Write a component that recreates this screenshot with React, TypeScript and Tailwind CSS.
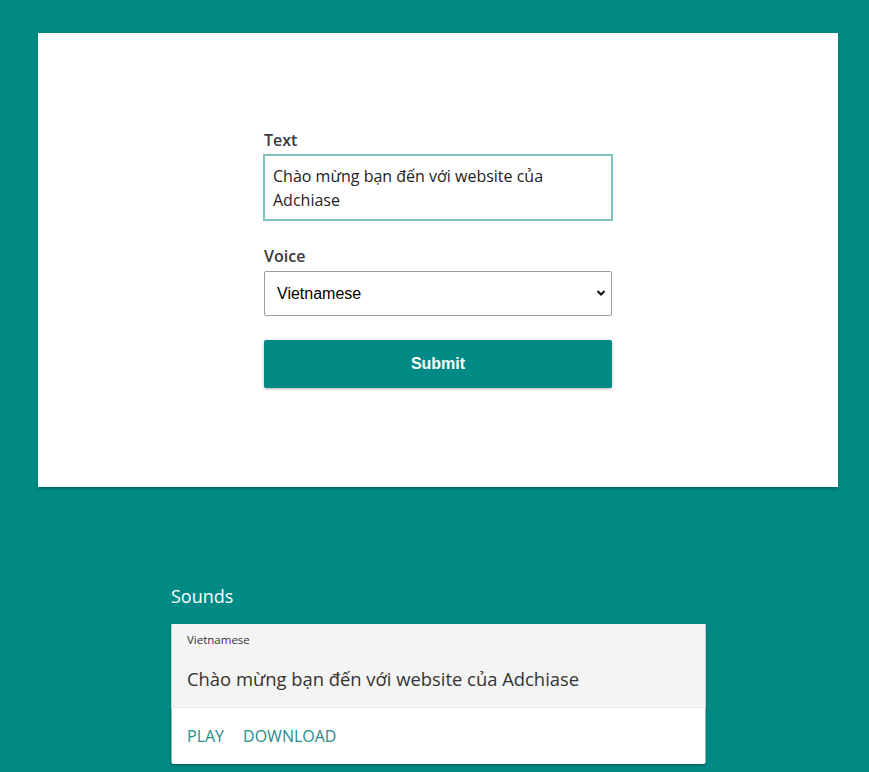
export default function App() {
  return (
    <div className="min-h-screen bg-[#008a86] pt-[33px] pb-[8px] font-['Open_Sans',sans-serif]">
      <div className="ml-[38px] w-[800px] h-[454px] bg-white shadow-[0_2px_3px_rgba(0,0,0,0.25)] pt-[95px]">
        <form className="w-[348px] mx-auto flex flex-col" onSubmit={(e) => e.preventDefault()}>
          <label className="text-[16px] leading-[24px] font-semibold text-[#3a3a3a]">Text</label>
          <textarea
            className="mt-[2px] w-[350px] -ml-[1px] h-[67px] border-2 border-[#7fc3c1] px-[8px] py-[8px] text-[16px] leading-[24px] text-[#222] resize-none outline-none"
            defaultValue="Chào mừng bạn đến với website của Adchiase"
          />
          <label className="mt-[23px] text-[16px] leading-[24px] font-semibold text-[#3a3a3a]">Voice</label>
          <div className="relative mt-[3px] h-[45px] border border-[#9e9e9e] rounded-[2px] bg-white flex items-center px-[12px]">
            <span className="font-['Liberation_Sans',Arial,sans-serif] text-[16px] text-black">Vietnamese</span>
            <svg className="absolute right-[5px] top-[17px]" width="10" height="8" viewBox="0 0 10 8">
              <path d="M1.5 2 L5 5.5 L8.5 2" stroke="#111" strokeWidth="2" fill="none" />
            </svg>
          </div>
          <button
            type="submit"
            className="mt-[24px] h-[48px] bg-[#008a86] rounded-[2px] shadow-[0_1px_3px_rgba(0,0,0,0.3)] text-white font-bold text-[16px] font-['Liberation_Sans',Arial,sans-serif]"
          >
            Submit
          </button>
        </form>
      </div>

      <div className="w-[534px] mx-auto mt-[96px] translate-x-[3.5px]">
        <h2 className="text-white text-[18px] leading-[27px]">Sounds</h2>
        <div className="mt-[14px] bg-white rounded-[2px] shadow-[0_2px_3px_rgba(0,0,0,0.25)]">
          <div className="bg-[#f4f4f4] px-[16px] pt-[8px] pb-[15px] border-b border-[#e6e6e6]">
            <div className="text-[11.5px] leading-[16px] text-[#333]">Vietnamese</div>
            <div className="mt-[17px] text-[18.4px] leading-[27px] text-[#333]">Chào mừng bạn đến với website của Adchiase</div>
          </div>
          <div className="flex gap-[19px] px-[16px] h-[56px] items-center">
            <span className="text-[16px] text-[#2a8c8a] uppercase">Play</span>
            <span className="text-[16px] text-[#2a8c8a] uppercase">Download</span>
          </div>
        </div>
      </div>
    </div>
  )
}
